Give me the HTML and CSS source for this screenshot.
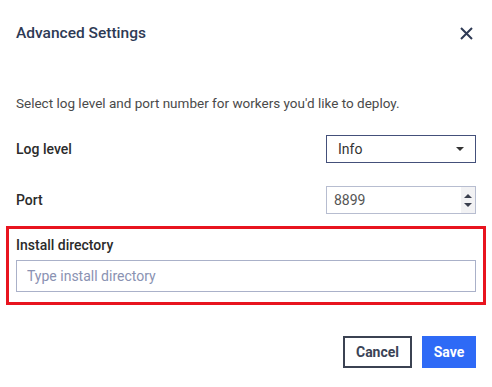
FILE: index.html
```html
<!DOCTYPE html>
<html lang="en">
	<head>
		<meta charset="UTF-8" />
		<meta name="viewport" content="width=device-width, initial-scale=1.0" />
		<title>Advanced Settings</title>
		<link rel="stylesheet" href="styles.css">
	</head>
	<body>
		<div class="dialog">
			<div class="header">
				<h2>Advanced Settings</h2>
				<button class="close" title="Close">
					<svg width="13" height="13" viewBox="0 0 13 13">
						<path d="M1 1 L12 12 M12 1 L1 12" stroke="#2e3a55" stroke-width="2" fill="none" />
					</svg>
				</button>
			</div>

			<p class="desc">Select log level and port number for workers you'd like to deploy.</p>

			<div class="row">
				<label>Log level</label>
				<div class="field select">
					<span>Info</span>
					<span class="caret"></span>
				</div>
			</div>

			<div class="row">
				<label>Port</label>
				<div class="field number">
					<span>8899</span>
					<span class="spin">
						<span class="up"></span>
						<span class="down"></span>
					</span>
				</div>
			</div>

			<div class="highlight">
				<label for="install-dir">Install directory</label>
				<input type="text" id="install-dir" placeholder="Type install directory" />
			</div>

			<div class="actions">
				<button class="btn cancel">Cancel</button>
				<button class="btn save">Save</button>
			</div>
		</div>
	</body>
</html>
```

FILE: styles.css
```css
body {
	margin: 0;
	background: #fff;
	font-family: Roboto, "Liberation Sans", Arial, sans-serif;
	color: #2e3a55;
}
.dialog {
	width: 460px;
	padding: 0 16px;
}
.header {
	display: flex;
	justify-content: space-between;
	align-items: center;
	padding-top: 23px;
	height: 20px;
}
.header h2 {
	margin: 0;
	font-size: 15.5px;
	font-weight: 500;
	line-height: 20px;
	color: #2e3a55;
}
.close {
	border: none;
	background: none;
	padding: 0;
	margin-right: 3px;
	width: 13px;
	height: 13px;
	display: flex;
}
.desc {
	margin: 51px 0 0;
	font-size: 13.5px;
	line-height: 18px;
	color: #4a4a4a;
}
.row {
	display: flex;
	justify-content: space-between;
	align-items: center;
	margin-top: 23px;
	height: 28px;
}
label {
	font-size: 14px;
	font-weight: 500;
	color: #2b2b2b;
}
.field {
	width: 150px;
	height: 28px;
	box-sizing: border-box;
	display: flex;
	align-items: center;
	justify-content: space-between;
	font-size: 14px;
	color: #333;
}
.select {
	border: 1px solid #44507a;
	padding: 0 11px 0 11px;
}
.caret {
	width: 0;
	height: 0;
	border-left: 4px solid transparent;
	border-right: 4px solid transparent;
	border-top: 4px solid #333;
}
.number {
	border: 1px solid #b7bdd0;
	padding-left: 7px;
	color: #555;
}
.spin {
	width: 14px;
	height: 100%;
	background: #f2f2f4;
	display: flex;
	flex-direction: column;
	align-items: center;
	justify-content: center;
	gap: 5px;
}
.up,
.down {
	width: 0;
	height: 0;
	border-left: 4px solid transparent;
	border-right: 4px solid transparent;
}
.up {
	border-bottom: 4px solid #3a3f4e;
}
.down {
	border-top: 4px solid #3a3f4e;
}
.highlight {
	margin: 12px -10px 0;
	border: 3px solid #e8141f;
	padding: 8px 7px 10px;
}
.highlight label {
	display: block;
	line-height: 16px;
}
.highlight input {
	display: block;
	margin-top: 7px;
	width: 100%;
	height: 32px;
	box-sizing: border-box;
	border: 1px solid #aab1c9;
	padding: 0 10px;
	font-family: inherit;
	font-size: 14px;
	outline: none;
}
.highlight input::placeholder {
	color: #8a92b2;
}
.actions {
	display: flex;
	justify-content: flex-end;
	gap: 10px;
	margin-top: 31px;
}
.btn {
	height: 32px;
	box-sizing: border-box;
	font-family: inherit;
	font-size: 14px;
	font-weight: bold;
	cursor: pointer;
}
.cancel {
	width: 69px;
	background: #fff;
	border: 2px solid #3b4252;
	color: #3a4356;
}
.save {
	width: 54px;
	background: #2e6af6;
	border: none;
	color: #fff;
}
```
